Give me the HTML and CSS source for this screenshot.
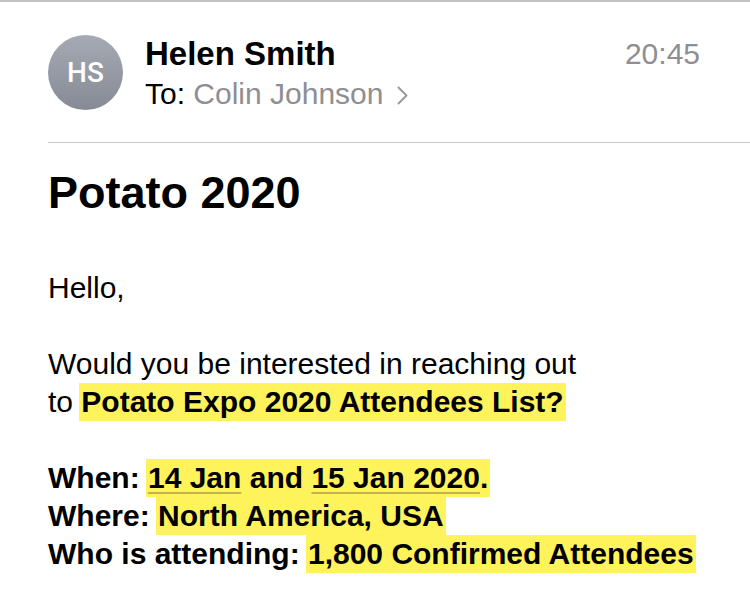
FILE: index.html
```html
<!DOCTYPE html>
<html lang="en">
<head>
<meta charset="utf-8">
<title>Potato 2020</title>
<link rel="stylesheet" href="styles.css">
</head>
<body>
<div class="mail">
  <header class="head">
    <div class="avatar">HS</div>
    <div class="who">
      <div class="name">Helen Smith</div>
      <div class="to">To: <span class="rcpt">Colin Johnson</span>
        <svg class="chev" width="11" height="19" viewBox="0 0 11 19"><polyline points="1.5,1.5 9.5,9.5 1.5,17.5" fill="none" stroke="#9a9a9f" stroke-width="2" stroke-linecap="round" stroke-linejoin="round"/></svg>
      </div>
    </div>
    <div class="time">20:45</div>
  </header>
  <h1 class="subject">Potato 2020</h1>
  <div class="body">
    <p>Hello,</p>
    <p>Would you be interested in reaching out<br>to <span class="hl"><b>Potato Expo 2020 Attendees List?</b></span></p>
    <p class="bold">When: <span class="hl"><span class="dd">14 Jan</span> and <span class="dd">15 Jan 2020</span>.</span><br>Where: <span class="hl">North America, USA</span><br>Who is attending: <span class="hl">1,800 Confirmed Attendees</span></p>
  </div>
</div>
</body>
</html>
```
FILE: styles.css
```css
html, body {
  margin: 0;
  padding: 0;
  background: #ffffff;
}
body {
  border-top: 2px solid #c2c2c4;
  font-family: "Liberation Sans", Arial, sans-serif;
  color: #000;
}
.mail {
  margin-left: 48px;
}
.head {
  display: flex;
  align-items: flex-start;
  padding-top: 32px;
  padding-bottom: 28px;
  border-bottom: 1px solid #c8c8cc;
}
.avatar {
  width: 75px;
  height: 75px;
  margin-top: 1px;
  border-radius: 50%;
  background: linear-gradient(#a6aab4, #858a94);
  color: #fff;
  display: flex;
  align-items: center;
  justify-content: center;
  font-family: Roboto, "Liberation Sans", sans-serif;
  font-weight: 500;
  font-size: 28px;
  flex-shrink: 0;
}
.who {
  margin-left: 22px;
  flex: 1;
}
.name {
  font-weight: 700;
  font-size: 33px;
  line-height: 40px;
}
.to {
  font-size: 30px;
  line-height: 40px;
  display: flex;
  align-items: center;
  white-space: pre;
}
.rcpt {
  color: #8e8e93;
}
.chev {
  margin-left: 14px;
  margin-top: 2px;
}
.time {
  font-size: 30px;
  line-height: 40px;
  color: #8e8e93;
  padding-right: 50px;
}
.subject {
  margin: 25px 0 0;
  font-size: 45px;
  line-height: 50px;
  font-weight: 700;
}
.body {
  margin-top: 51px;
  font-size: 30px;
  line-height: 38px;
}
.body p {
  margin: 0 0 38px;
}
.bold {
  font-weight: 700;
}
.hl {
  display: inline-block;
  background: #fff35c;
  padding: 0 2px;
  margin: 0 -2px;
  font-weight: 700;
}
.dd {
  text-decoration: underline;
  text-decoration-color: #c4b24a;
  text-decoration-thickness: 2px;
  text-underline-offset: 4px;
}
```
